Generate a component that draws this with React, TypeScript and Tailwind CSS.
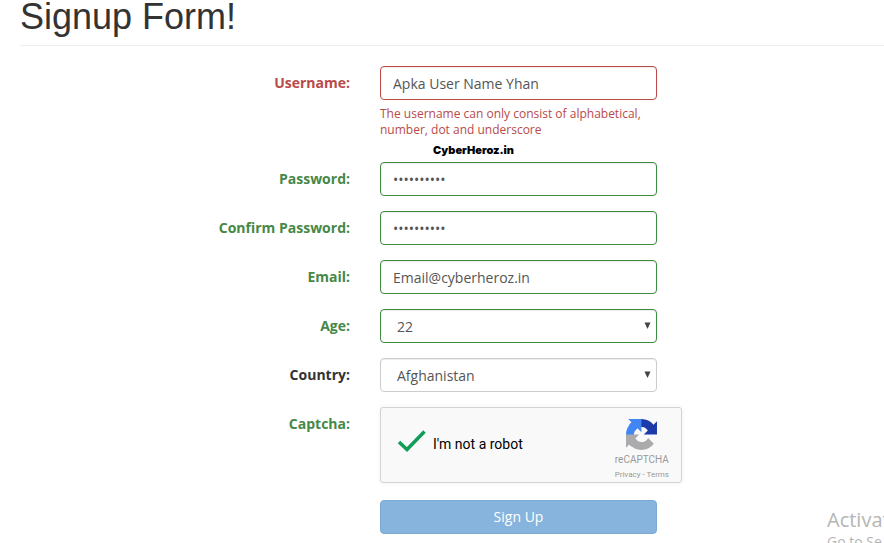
import type { ReactNode } from "react";

type Status = "error" | "success" | "none";

interface RowProps {
  id: string;
  label: string;
  status: Status;
  children: ReactNode;
}

const labelColors: Record<Status, string> = {
  error: "text-[#b94a48]",
  success: "text-[#468847]",
  none: "text-[#333333]"
};

const borderColors: Record<Status, string> = {
  error: "border-[#b94a48]",
  success: "border-[#3c8b40]",
  none: "border-[#cccccc]"
};

const controlClass =
  "block h-[34px] w-full max-w-[277px] rounded border bg-white text-sm text-[#555555] shadow-[inset_0_1px_1px_rgba(0,0,0,0.075)] outline-none";

const FormRow = ({ id, label, status, children }: RowProps) => (
  <div className="grid grid-cols-[minmax(0,5fr)_minmax(0,7fr)]">
    <label htmlFor={id} className={`pt-[7px] pr-[30px] text-right text-sm leading-5 font-bold ${labelColors[status]}`}>
      {label}
    </label>
    <div>{children}</div>
  </div>
);

interface InputProps {
  id: string;
  type: string;
  value: string;
  status: Status;
}

const TextInput = ({ id, type, value, status }: InputProps) => (
  <input id={id} type={type} defaultValue={value} className={`${controlClass} px-3 ${borderColors[status]}`} />
);

const SelectInput = ({ id, value, status }: Omit<InputProps, "type">) => (
  <div className="relative max-w-[277px]">
    <select id={id} defaultValue={value} className={`${controlClass} appearance-none px-4 pt-0.5 ${borderColors[status]}`}>
      <option value={value}>{value}</option>
    </select>
    <svg className="pointer-events-none absolute top-[13px] right-1.5 h-[7px] w-[7px]" viewBox="0 0 7 7">
      <path d="M0.5 0.5h6L3.5 7z" fill="#444444" />
    </svg>
  </div>
);

const RecaptchaLogo = () => (
  <svg className="h-[31px] w-[31px]" viewBox="0 0 64 64">
    <path
      d="M64 31.955l-.033-1.37V4.687l-7.16 7.16C50.948 4.674 42.033.093 32.05.093c-10.4 0-19.622 4.96-25.458 12.64l11.736 11.86a15.55 15.55 0 0 1 4.754-5.334c2.05-1.6 4.952-2.906 8.968-2.906.485 0 .86.057 1.135.163 4.976.393 9.288 3.14 11.828 7.124l-8.307 8.307L64 31.953"
      fill="#1c3aa9"
    />
    <path
      d="M31.862.094l-1.37.033H4.594l7.16 7.16C4.58 13.147 0 22.06 0 32.046c0 10.4 4.96 19.622 12.64 25.458L24.5 45.768a15.55 15.55 0 0 1-5.334-4.754c-1.6-2.05-2.906-4.952-2.906-8.968 0-.485.057-.86.163-1.135.393-4.976 3.14-9.288 7.124-11.828l8.307 8.307L31.86.095"
      fill="#4285f4"
    />
    <path
      d="M.001 32.045l.033 1.37v25.898l7.16-7.16c5.86 7.173 14.774 11.754 24.76 11.754 10.4 0 19.622-4.96 25.458-12.64l-11.736-11.86a15.55 15.55 0 0 1-4.754 5.334c-2.05 1.6-4.952 2.906-8.968 2.906-.485 0-.86-.057-1.135-.163-4.976-.393-9.288-3.14-11.828-7.124l8.307-8.307c-10.522.04-22.4.066-27.295-.005"
      fill="#ababab"
    />
  </svg>
);

const Captcha = () => (
  <div className="flex h-[76px] max-w-[302px] items-center justify-between rounded-[3px] border border-[#d3d3d3] bg-[#f9f9f9] pr-3 pl-4 font-['Roboto',sans-serif] shadow-[0_0_4px_1px_rgba(0,0,0,0.04)]">
    <div className="flex items-center gap-1.5 pb-0.5">
      <span className="relative h-[30px] w-[30px]">
        <input id="captcha" type="checkbox" defaultChecked className="peer block h-full w-full appearance-none" />
        <svg
          className="pointer-events-none absolute inset-0 hidden h-full w-full peer-checked:block"
          viewBox="0 0 30 30"
        >
          <path d="M2 13L10 20.5L27.5 2.5" fill="none" stroke="#0f9d58" strokeWidth="3.5" />
        </svg>
      </span>
      <label htmlFor="captcha" className="text-sm text-black">
        I'm not a robot
      </label>
    </div>
    <div className="flex flex-col items-center pt-2 text-[#999999]">
      <RecaptchaLogo />
      <span className="mt-1 text-[10px] leading-3">reCAPTCHA</span>
      <span className="mt-1 text-[8px] leading-[10px]">
        <a href="#privacy">Privacy</a> - <a href="#terms">Terms</a>
      </span>
    </div>
  </div>
);

const App = () => {
  return (
    <main className="relative min-h-screen overflow-hidden bg-white pl-5 font-['Open_Sans',sans-serif]">
      <h1 className="mb-5 border-b border-[#eeeeee] pb-3 font-['Liberation_Sans',sans-serif] text-4xl leading-[33px] text-[#333333]">
        Signup Form!
      </h1>
      <form className="flex flex-col gap-[15px]">
        <FormRow id="username" label="Username:" status="error">
          <TextInput id="username" type="text" value="Apka User Name Yhan" status="error" />
          <div className="-mb-[15px] max-w-[277px] pt-1.5 pb-1 text-xs leading-4 text-[#b94a48]">
            <p>The username can only consist of alphabetical, number, dot and underscore</p>
            <p className="mt-1 pl-[53px] font-['Inter',sans-serif] text-[11px] leading-4 font-black text-black">
              CyberHeroz.in
            </p>
          </div>
        </FormRow>
        <FormRow id="password" label="Password:" status="success">
          <TextInput id="password" type="password" value="abcdefghij" status="success" />
        </FormRow>
        <FormRow id="confirm" label="Confirm Password:" status="success">
          <TextInput id="confirm" type="password" value="abcdefghij" status="success" />
        </FormRow>
        <FormRow id="email" label="Email:" status="success">
          <TextInput id="email" type="email" value="Email@cyberheroz.in" status="success" />
        </FormRow>
        <FormRow id="age" label="Age:" status="success">
          <SelectInput id="age" value="22" status="success" />
        </FormRow>
        <FormRow id="country" label="Country:" status="none">
          <SelectInput id="country" value="Afghanistan" status="none" />
        </FormRow>
        <FormRow id="captcha" label="Captcha:" status="success">
          <Captcha />
        </FormRow>
        <div className="grid grid-cols-[minmax(0,5fr)_minmax(0,7fr)]">
          <button
            type="submit"
            className="col-start-2 mt-0.5 h-[34px] w-full max-w-[277px] rounded border border-[#7aaad3] bg-[#86b4dd] text-sm font-medium text-white"
          >
            Sign Up
          </button>
        </div>
      </form>
      <aside className="pointer-events-none absolute top-[508px] right-0 h-[35px] w-[57px] overflow-hidden whitespace-nowrap text-[#b5b5b5]">
        <p className="text-xl leading-6">Activat</p>
        <p className="text-sm leading-5">Go to Se</p>
      </aside>
    </main>
  );
};

export default App;
